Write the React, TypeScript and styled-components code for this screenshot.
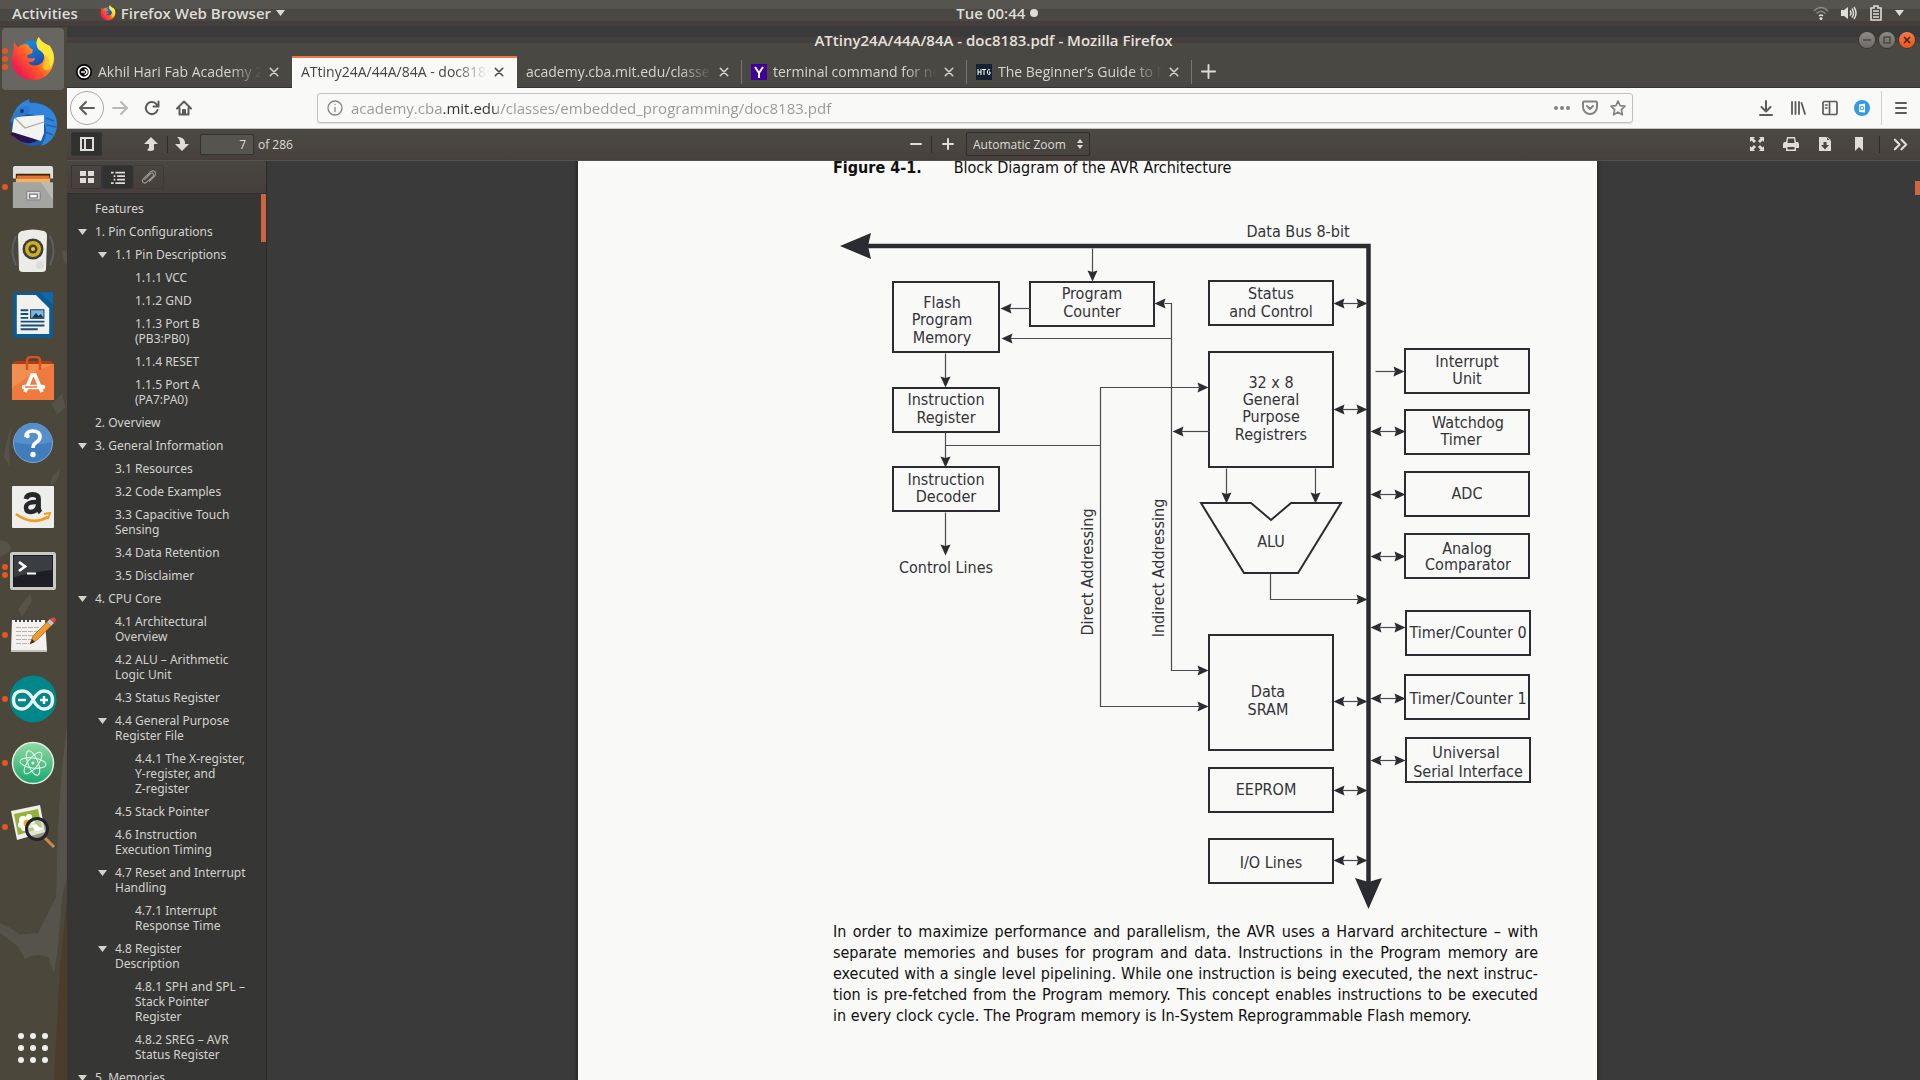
import React from "react";
import styled, { createGlobalStyle } from "styled-components";

const ui = `"Open Sans", "Noto Sans", sans-serif`;
const uiWide = `"Noto Sans", "Open Sans", sans-serif`;
const pdfFont = `"DejaVu Sans Condensed", "DejaVu Sans", sans-serif`;
const paper = "#f9f9f7";
const chrome = "#494843";
const ink = "#2b2c31";

const Global = createGlobalStyle`
  *, *::before, *::after { box-sizing: border-box; }
  body { margin: 0; background: #3a3a3a; }
  button, input, select { font: inherit; color: inherit; }
  button { background: none; border: 0; padding: 0; margin: 0; }
  svg { display: block; flex: none; }
  ul { list-style: none; margin: 0; padding: 0; }
`;

const Desktop = styled.div`
  height: 100vh;
  display: grid;
  grid-template: 27px minmax(0, 1fr) / 67px minmax(0, 1fr);
  font-family: ${ui};
  font-size: 14px;
  color: #dedcd6;
  overflow: hidden;
`;

/* ---------- top panel ---------- */
const Panel = styled.header`
  grid-column: 1 / -1;
  display: grid;
  grid-template-columns: 12fr auto 11fr;
  align-items: center;
  padding: 0 16px 2px 12px;
  font-size: 15px;
  font-weight: 600;
  line-height: 20px;
  background: linear-gradient(#55544e 9px, ${chrome} 9px, ${chrome} 21px, #463d3d 21px, #463d3d 26px, #3a3a3a 26px);
`;
const PanelGroup = styled.div<{ $end?: boolean }>`
  display: flex;
  align-items: center;
  justify-content: ${(p) => (p.$end ? "flex-end" : "flex-start")};
  gap: ${(p) => (p.$end ? "12px" : "22px")};
`;
const PanelButton = styled.button`
  display: flex;
  align-items: center;
  gap: 5px;
  font-weight: 600;
`;

/* ---------- dock ---------- */
const Dock = styled.nav`
  position: relative;
  display: flex;
  flex-direction: column;
  padding-top: 1px;
  background: #4b473a;
  overflow: hidden;
`;
const Wallpaper = styled.svg`
  position: absolute;
  left: 0;
  top: 0;
`;
const DockItem = styled.button<{ $active?: boolean }>`
  position: relative;
  width: 62px;
  height: 62px;
  flex: none;
  margin: 0 2px 2px;
  border-radius: 4px;
  display: grid;
  place-items: center;
  background: ${(p) => (p.$active ? "#676660" : "transparent")};
`;
const Dots = styled.span`
  position: absolute;
  left: 0;
  top: 0;
  bottom: 0;
  display: flex;
  flex-direction: column;
  justify-content: center;
  gap: 2px;
`;
const Dot = styled.i`
  width: 6px;
  height: 6px;
  border-radius: 3px;
  background: #e9541f;
`;
const AppsButton = styled.button`
  position: relative;
  margin: auto auto 16px 17px;
`;

/* ---------- browser window ---------- */
const Window = styled.main`
  display: grid;
  grid-template-rows: 29px 32px 41px 32px minmax(0, 1fr);
  min-width: 0;
  background: ${chrome};
`;
const TitleBar = styled.div`
  display: grid;
  grid-template-columns: 1fr auto 1fr;
  align-items: center;
  padding: 0 5px 3px;
  font-size: 15px;
  line-height: 20px;
  font-weight: 600;
  color: #e4e2dc;
  background: linear-gradient(#3a3a3a 10px, #463d3d 10px, #463d3d 16px, ${chrome} 16px);
`;
const WindowButtons = styled.div`
  display: flex;
  justify-content: flex-end;
  gap: 4px;
`;
const WindowButton = styled.button<{ $close?: boolean }>`
  width: 16px;
  height: 16px;
  border-radius: 8px;
  display: grid;
  place-items: center;
  background: ${(p) => (p.$close ? "linear-gradient(#f57a4b,#ea541f)" : "linear-gradient(#8d8b84,#6c6a64)")};
  box-shadow: 0 0 0 1px #3a3934;
`;
const TabStrip = styled.div`
  display: flex;
  border-bottom: 1px solid #33332f;
`;
const Tab = styled.div<{ $active?: boolean; $line?: boolean }>`
  flex: 0 1 225px;
  min-width: 0;
  display: flex;
  align-items: center;
  gap: 6px;
  height: 32px;
  padding: 0 12px 2px 9px;
  position: relative;
  color: ${(p) => (p.$active ? "#44433f" : "#d6d4ce")};
  background: ${(p) => (p.$active ? paper : "transparent")};
  border-top: 2px solid ${(p) => (p.$active ? "#f07746" : "transparent")};
  &::after {
    content: "";
    position: absolute;
    right: 0;
    top: 2px;
    height: 24px;
    width: ${(p) => (p.$line ? "1px" : "0")};
    background: #777670;
  }
`;
const TabTitle = styled.button`
  flex: 1;
  min-width: 0;
  overflow: hidden;
  white-space: nowrap;
  text-align: left;
  line-height: 20px;
  mask-image: linear-gradient(90deg, #000 calc(100% - 32px), transparent);
`;
const IconButton = styled.button<{ $w?: number }>`
  width: ${(p) => p.$w ?? 32}px;
  height: 30px;
  flex: none;
  display: grid;
  place-items: center;
`;
const CloseButton = styled(IconButton)`
  width: 12px;
  height: 20px;
`;

const NavBar = styled.div`
  display: flex;
  align-items: center;
  background: ${paper};
  border-bottom: 1px solid #c4c3bf;
  padding: 0 3px;
  color: #5c5b57;
`;
const BackButton = styled.button`
  width: 34px;
  height: 34px;
  border-radius: 17px;
  border: 1px solid #a9a8a4;
  display: grid;
  place-items: center;
`;
const UrlBox = styled.label`
  flex: 1;
  max-width: 1316px;
  height: 30px;
  margin-left: 117px;
  margin-right: 117px;
  display: flex;
  align-items: center;
  gap: 8px;
  padding: 0 6px 0 9px;
  border: 1px solid #c2c1bd;
  border-radius: 3px;
  box-shadow: 0 1px 1px #e0dfdb;
  color: #85847f;
`;
const UrlInput = styled.input`
  flex: 1;
  min-width: 0;
  border: 0;
  outline: 0;
  padding: 0;
  font-size: 15px;
  line-height: 22px;
  color: #8f8e8a;
  background: linear-gradient(90deg, #989793 92px, #33322f 92px, #33322f 146px, #989793 146px);
  -webkit-background-clip: text;
  -webkit-text-fill-color: transparent;
`;
const UrlActions = styled.div`
  display: flex;
  gap: 12px;
`;
const NavDivider = styled.i`
  width: 1px;
  height: 34px;
  margin: 0 3px;
  background: #d0cfcb;
`;

/* ---------- pdf toolbar ---------- */
const PdfBar = styled.div`
  display: grid;
  grid-template-columns: 1fr auto 1fr;
  align-items: center;
  padding: 0 0 1px 4px;
  font-size: 12px;
  background: linear-gradient(#4a4843, #494641 60%, #473e3c);
  border-bottom: 1px solid #54524d;
`;
const BarGroup = styled.div<{ $end?: boolean }>`
  display: flex;
  align-items: center;
  justify-content: ${(p) => (p.$end ? "flex-end" : "flex-start")};
`;
const ToggleButton = styled.button<{ $on?: boolean; $dim?: boolean }>`
  width: 31px;
  height: 24px;
  display: grid;
  place-items: center;
  border: 1px solid #35343a;
  border-radius: 2px;
  background: ${(p) => (p.$on ? "#31312f" : "transparent")};
  opacity: ${(p) => (p.$dim ? 0.55 : 1)};
`;
const Splitter = styled.i<{ $gap?: boolean }>`
  width: 1px;
  height: 17px;
  margin-left: ${(p) => (p.$gap ? 3 : 0)}px;
  background: #2b2b29;
`;
const PagingGroup = styled(BarGroup)`
  margin-left: 33px;
`;
const PageInput = styled.input`
  width: 54px;
  height: 21px;
  margin: 0 4px;
  padding: 0 7px;
  text-align: right;
  border: 1px solid #33322f;
  border-radius: 2px;
  background: #55544e;
`;
const ZoomBox = styled.span`
  display: flex;
  align-items: center;
  height: 24px;
  width: 124px;
  margin-left: 2px;
  padding: 0 6px;
  border: 1px solid #2f2e2c;
  border-radius: 2px;
`;
const ZoomSelect = styled.select`
  appearance: none;
  flex: 1;
  min-width: 0;
  padding: 0;
  border: 0;
  background: transparent;
`;

/* ---------- pdf body ---------- */
const Body = styled.div`
  display: grid;
  grid-template-columns: 200px minmax(0, 1fr);
  min-height: 0;
`;
const Sidebar = styled.aside`
  display: flex;
  flex-direction: column;
  min-height: 0;
  border-right: 1px solid #2a2a2a;
  background: #363734;
`;
const SidebarBar = styled.div`
  display: flex;
  flex: none;
  height: 33px;
  padding: 4px;
  background: linear-gradient(#494641, #473e3c);
  border-bottom: 1px solid #2f2e2c;
`;
const Outline = styled.div`
  flex: 1;
  min-height: 0;
  overflow: hidden;
  position: relative;
  padding-top: 3px;
  font-family: ${uiWide};
  font-size: 12px;
  line-height: 15px;
  color: #d3d2ce;
`;
const OutlineRow = styled.li<{ $level: number }>`
  display: flex;
  padding: 4px 10px 4px ${(p) => 11 + p.$level * 20}px;
`;
const Twisty = styled.button`
  width: 17px;
  height: 15px;
  flex: none;
  display: flex;
  align-items: center;
`;
const Leaf = styled.span`
  width: 17px;
  flex: none;
`;
const OutlineLink = styled.a`
  color: inherit;
  text-decoration: none;
  white-space: pre;
`;
const Thumb = styled.i<{ $w: number; $top: number; $h: number }>`
  position: absolute;
  right: 0;
  top: ${(p) => p.$top}px;
  width: ${(p) => p.$w}px;
  height: ${(p) => p.$h}px;
  background: #cb6640;
`;
const Viewer = styled.div`
  position: relative;
  overflow: hidden;
  padding-right: 12px;
  display: flex;
  justify-content: center;
  background: #3a3a3a;
`;
const Page = styled.article`
  flex: 0 1 1019px;
  padding: 0 59px 0 255px;
  background: ${paper};
  box-shadow: 0 0 3px 2px #2a2a2c;
  font-family: ${pdfFont};
  font-size: 16px;
  color: #101010;
`;
const Caption = styled.h1`
  margin: 0;
  display: flex;
  gap: 32px;
  font-size: 16px;
  line-height: 14px;
  font-weight: 400;
  white-space: nowrap;
`;
const Paragraph = styled.p`
  margin: 0;
  padding-top: 2px;
  line-height: 21px;
`;
const Line = styled.span`
  display: block;
  white-space: nowrap;
  text-align-last: justify;
  &:last-child { text-align-last: left; }
`;
const DiagramText = styled.text`
  font-family: ${pdfFont};
  font-size: 16px;
  fill: #333338;
`;

/* ---------- diagram ---------- */
type BoxSpec = [number, number, number, number];
const boxes: BoxSpec[] = [
  [893, 282, 106, 70], [1030, 282, 124, 44], [893, 388, 106, 44], [893, 467, 106, 44],
  [1209, 281, 124, 44], [1209, 352, 124, 115], [1405, 349, 124, 44], [1405, 410, 124, 44],
  [1405, 472, 124, 44], [1405, 534, 124, 44], [1406, 611, 124, 44], [1405, 675, 124, 44],
  [1406, 738, 124, 44], [1209, 635, 124, 115], [1209, 768, 124, 44], [1209, 839, 124, 44],
];
type Label = [number, number, string];
const labels: Label[] = [
  [942, 308, "Flash"], [942, 325, "Program"], [942, 343, "Memory"],
  [1092, 299, "Program"], [1092, 317, "Counter"],
  [946, 405, "Instruction"], [946, 423, "Register"],
  [946, 485, "Instruction"], [946, 502, "Decoder"], [946, 573, "Control Lines"],
  [1298, 237, "Data Bus 8-bit"], [1271, 299, "Status"], [1271, 317, "and Control"],
  [1271, 388, "32 x 8"], [1271, 405, "General"], [1271, 422, "Purpose"], [1271, 440, "Registrers"],
  [1467, 367, "Interrupt"], [1467, 384, "Unit"], [1468, 428, "Watchdog"], [1461, 445, "Timer"],
  [1467, 499, "ADC"], [1467, 554, "Analog"], [1468, 570, "Comparator"],
  [1271, 547, "ALU"], [1468, 638, "Timer/Counter 0"], [1468, 704, "Timer/Counter 1"],
  [1466, 758, "Universal"], [1468, 777, "Serial Interface"],
  [1268, 697, "Data"], [1268, 715, "SRAM"], [1266, 795, "EEPROM"], [1271, 868, "I/O Lines"],
];
const wires = [
  "M1092 248V272", "M1030 308H1009", "M1171 338H1010", "M945 353V378", "M945 432V458",
  "M945 445H1100", "M945 512V546", "M1200 387H1100V706H1200", "M1209 431H1181",
  "M1164 303H1171V670H1200", "M1226 468V494", "M1315 468V494", "M1270 573V599H1359", "M1375 371H1396",
  ...[303, 409, 701, 790, 860].map((y) => `M1342 ${y}H1359`),
  ...[431, 494, 556, 627, 698, 760].map((y) => `M1378 ${y}H1396`),
];
type Tip = [number, number, number];
const tips: Tip[] = [
  [1092, 281, 90], [1000, 308, 180], [1001, 338, 180], [1154, 303, 180], [945, 387, 90], [945, 467, 90],
  [945, 555, 90], [1208, 387, 0], [1172, 431, 180], [1208, 670, 0], [1208, 706, 0], [1226, 503, 90],
  [1315, 503, 90], [1367, 599, 0], [1404, 371, 0],
  ...[303, 409, 701, 790, 860].flatMap((y): Tip[] => [[1333, y, 180], [1367, y, 0]]),
  ...[431, 494, 556, 627, 698, 760].flatMap((y): Tip[] => [[1370, y, 180], [1405, y, 0]]),
];

function Diagram() {
  return (
    <svg width="705" height="744" viewBox="833 175 705 744" role="img" aria-label="Block diagram">
      <g fill="none" stroke={ink} strokeWidth="2">
        {boxes.map(([x, y, w, h], i) => <rect key={i} x={x} y={y} width={w} height={h} />)}
        <path d="M1201 503H1251L1271 520 1291 503H1341L1298 573H1244Z" />
      </g>
      <path d="M868 246H1368.5V882" fill="none" stroke={ink} strokeWidth="4.5" />
      <g fill={ink}>
        <path d="M840 246L871 233 868 246 871 259Z" />
        <path d="M1368.5 909L1355 878 1368.5 882 1382 878Z" />
        {tips.map(([x, y, r], i) => (
          <path key={i} d="M0 0L-11 -5 -9.5 0 -11 5Z" transform={`translate(${x + 0.5} ${y + 0.5}) rotate(${r})`} />
        ))}
      </g>
      <g fill="none" stroke="#4a4b50" strokeWidth="1.2" transform="translate(0.5 0.5)">
        {wires.map((d) => <path key={d} d={d} />)}
      </g>
      {labels.map(([x, y, t], i) => <DiagramText key={i} x={x} y={y} textAnchor="middle">{t}</DiagramText>)}
      <DiagramText transform="translate(1093 572) rotate(-90)" textAnchor="middle">Direct Addressing</DiagramText>
      <DiagramText transform="translate(1164 568) rotate(-90)" textAnchor="middle">Indirect Addressing</DiagramText>
    </svg>
  );
}

/* ---------- icons ---------- */
const FirefoxIcon = ({ size }: { size: number }) => (
  <svg width={size} height={size} viewBox="0 0 48 48">
    <defs>
      <linearGradient id="fxa" x1="0.9" y1="0.1" x2="0.15" y2="0.75">
        <stop offset="0" stopColor="#fff14a" /><stop offset=".35" stopColor="#ffa41f" />
        <stop offset=".65" stopColor="#ff5a26" /><stop offset="1" stopColor="#f0204f" />
      </linearGradient>
      <linearGradient id="fxb" x1="0" y1="0" x2=".5" y2="1">
        <stop offset="0" stopColor="#0a9df5" /><stop offset="1" stopColor="#243a9e" />
      </linearGradient>
    </defs>
    <circle cx="24" cy="23" r="18" fill="url(#fxb)" />
    <path d="M5 6C5 9 7 11 8 12 11 9 15 8 19 9 20 11 21 13 24 14L23 18 18 20 18 23C21 23 23 24 26 23 26 26 23 28 19 27 21 32 30 32 34 27 37 22 36 17 30 14 27 10 27 5 30 1 32 6 38 9 41 10 46 16 48 24 44 33 40 42 32 46 24 46 13 46 5 40 2 30 1 24 2 18 4 14 3 11 4 8 5 6Z" fill="url(#fxa)" />
    <path d="M30 1C32 6 38 9 41 10 46 17 47 26 42 34 36 34 38 26 36 20 34 16 31 15 30 14 27 10 27 5 30 1Z" fill="#ffe838" />
    <path d="M42 34C38 37 34 36 34 30 38 25 37 22 36 19 40 22 42 28 42 34Z" fill="#ffc22b" />
  </svg>
);
const Thunderbird = () => (
  <svg width="50" height="50" viewBox="0 0 50 50">
    <circle cx="25" cy="26" r="22" fill="#1c5bb0" />
    <path d="M3 24C5 13 11 4 22 1 20 4 22 5 24 5 39 5 49 14 49 26 49 38 41 46 33 48 38 40 39 34 37 27 33 18 24 15 14 16 8 18 5 21 3 24Z" fill="#3184d8" />
    <path d="M38 20L46 23M38 27L48 29M37 34L45 37" stroke="#1f62b5" strokeWidth="1.500" />
    <path d="M2 36L8 33 30 42C24 46 18 46 12 43Z" fill="#2a1450" />
    <path d="M6 19L36 17 36 35 33 43 4 34Z" fill="#f3f3f1" />
    <path d="M6 19L17 30 36 24" stroke="#a9a9a9" strokeWidth="1.300" fill="none" />
    <path d="M2 25C5 14 12 7 19 8 23 9 22 15 17 17L7 20Z" fill="#2e78cf" /><circle cx="14" cy="13" r="2" fill="#153b70" />
  </svg>
);
const Files = () => (
  <svg width="42" height="44" viewBox="0 0 44 46">
    <path d="M3 1H41Q43 1 43 4V14H1V4Q1 1 3 1Z" fill="#e0e0dd" /><path d="M4 9H40V22H4Z" fill="#3d2417" />
    <rect x="5" y="11" width="34" height="3" fill="#e9732e" /><rect x="4" y="14" width="36" height="6" fill="#f5b25f" />
    <path d="M1 18H43V45H1Z" fill="#b9b9b6" /><path d="M1 18L30 18 43 36V45H1Z" fill="#a4a4a1" />
    <rect x="15.500" y="27.500" width="14" height="9" rx="1" fill="#ddd" stroke="#777" /><rect x="18.500" y="30.500" width="8" height="4" fill="#fff" stroke="#555" />
  </svg>
);
const Speaker = () => (
  <svg width="46" height="46" viewBox="0 0 46 46">
    <path d="M6 8Q-1 23 6 37M40 8Q47 23 40 37" stroke="#5f6a78" strokeWidth="2" strokeOpacity=".7" fill="none" />
    <path d="M12 3Q23 0 34 3 37 4 37 8L36 41Q36 44 32 44H13Q9 44 9 41L8 8Q8 4 12 3Z" fill="#ebebe8" />
    <circle cx="23" cy="21" r="10.500" fill="#3c3c3c" /><circle cx="23" cy="21" r="8" fill="#cfaf22" />
    <circle cx="23" cy="21" r="4.500" fill="#4a3f1c" /><circle cx="23" cy="21" r="2" fill="#e3cc55" /><circle cx="30" cy="37" r="4" fill="#dcdcd9" />
  </svg>
);
const Writer = () => (
  <svg width="40" height="48" viewBox="0 0 42 48">
    <path d="M3 0H28L42 13V45Q42 48 39 48H3Q0 48 0 45V3Q0 0 3 0Z" fill="#0a5c99" /><path d="M28 0H42V13Z" fill="#0c68b0" />
    <path d="M4 3H24L38 17V44H4Z" fill="#f3f1ec" />
    <g stroke="#14507f" strokeWidth="2"><path d="M8 19H16M8 23H16M8 27H16M8 31H33M8 35H33M8 39H26" /></g>
    <rect x="18.500" y="18.500" width="14" height="9" fill="#7ab8e0" stroke="#0f3d5f" /><path d="M20 27L24 22 27 25 29 23 32 27Z" fill="#16334a" />
  </svg>
);
const Software = () => (
  <svg width="42" height="46" viewBox="0 0 42 46">
    <path d="M1 7L3 5H39L42 9H0Z" fill="#b23c14" />
    <path d="M15 12V5Q15 1 19 1H24Q28 1 28 5V12" fill="none" stroke="#d9531f" strokeWidth="2.500" />
    <path d="M0 8H42V44H0Z" fill="#ef7a3e" /><path d="M0 8H42L24 15 0 32Z" fill="#f08f4f" />
    <path d="M15 8V14M28 8V14" stroke="#d9531f" strokeWidth="2.500" />
    <path d="M13 36L20 19H23L30 36" fill="none" stroke="#fff" strokeWidth="3.600" /><path d="M12 31H31" stroke="#fff" strokeWidth="4.500" strokeLinecap="round" /><path d="M13 31H25" stroke="#ef7a3e" strokeWidth="1.500" />
  </svg>
);
const Help = () => (
  <svg width="42" height="42" viewBox="0 0 42 42">
    <circle cx="21" cy="21" r="19.500" fill="#3f7dbd" stroke="#7fa9d4" /><path d="M2 20A19 19 0 0 1 40 20Q21 25 2 20Z" fill="#5590cb" />
    <path d="M14 15Q14 9 20.500 9 28 9 28 15 28 18 24 20.500 21 22.500 21 26" fill="none" stroke="#fff" strokeWidth="3.600" /><circle cx="15.500" cy="14" r="2.200" fill="#fff" /><circle cx="21" cy="32.500" r="2.700" fill="#fff" />
  </svg>
);
const Amazon = () => (
  <svg width="42" height="42" viewBox="0 0 42 42">
    <rect width="42" height="42" rx="1" fill="#eeeeec" />
    <path d="M14 13Q15 8.500 20.500 8.500 26.500 8.500 26.500 13V22Q26.500 24.500 28.500 26.500" fill="none" stroke="#26272b" strokeWidth="4.800" />
    <path d="M26 16Q14 15.500 14 21.500 14 26 18.500 26 25 26 26 19" fill="none" stroke="#26272b" strokeWidth="4.400" />
    <path d="M4 28Q20 40 36 31" fill="none" stroke="#f49a1c" strokeWidth="2.600" /><path d="M32 28L38 27 36 33" fill="none" stroke="#f49a1c" strokeWidth="1.800" />
  </svg>
);
const Terminal = () => (
  <svg width="46" height="38" viewBox="0 0 46 38">
    <rect x="1.500" y="1.500" width="43" height="35" rx="1" fill="#1c1f26" stroke="#c9c9c6" strokeWidth="3" />
    <path d="M4 4H42V18Q22 20 4 25Z" fill="#3a3d42" />
    <path d="M9 10L15 14.500 9 19" fill="none" stroke="#fff" strokeWidth="2.800" /><path d="M17 21.500H26" stroke="#fff" strokeWidth="2" />
  </svg>
);
const Notes = () => (
  <svg width="48" height="40" viewBox="0 0 48 40">
    <path d="M3 5H36L38 36H2Z" fill="#f3f2ee" /><path d="M2 35H38V37H2Z" fill="#c4bfb8" />
    <g stroke="#b7b5ae"><path d="M7 12.500H31M7 16.500H30M7 20.500H28M7 24.500H24M7 28.500H20" strokeDasharray="5 1" /></g>
    <path d="M7 2V7M11 2V7M15 2V7M19 2V7M23 2V7M27 2V7M31 2V7" stroke="#454441" strokeWidth="2" />
    <path d="M21 29L24 21 38 7 42 11 28 25Z" fill="#f19a32" stroke="#a85b15" strokeWidth=".7" /><path d="M38 7L41 4 45 8 42 11Z" fill="#bdc5cd" /><path d="M41 4Q44 1 46 3 48 6 45 8Z" fill="#e5453b" />
    <path d="M21 29L23 24 26 27Z" fill="#333" />
  </svg>
);
const Arduino = () => (
  <svg width="48" height="48" viewBox="0 0 48 48">
    <circle cx="24" cy="24" r="23.500" fill="#00878a" />
    <path d="M24 24C20 17 17 16 13 16 8 16 4.500 19 4.500 25S8 34 13 34C17 34 20 32 24 25 28 18 31 16 35 16 40 16 43.500 19 43.500 25S40 34 35 34C31 34 28 32 24 25Z" fill="none" stroke="#e8f3f1" strokeWidth="3.400" />
    <path d="M9 25H17M31 25H39M35 21V29" stroke="#fff" strokeWidth="2.400" />
  </svg>
);
const Atom = () => (
  <svg width="44" height="44" viewBox="0 0 44 44">
    <defs><linearGradient id="at" x1="0" y1="0" x2="0" y2="1"><stop offset="0" stopColor="#93d9a4" /><stop offset=".5" stopColor="#56c287" /><stop offset="1" stopColor="#17a872" /></linearGradient></defs>
    <circle cx="22" cy="22" r="20.500" fill="url(#at)" stroke="#e3ece5" strokeWidth="1.500" />
    <g fill="none" stroke="#e9faf0" strokeWidth="1">
      <ellipse cx="22" cy="22" rx="13" ry="5" transform="rotate(8 22 22)" /><ellipse cx="22" cy="22" rx="13" ry="5" transform="rotate(68 22 22)" /><ellipse cx="22" cy="22" rx="13" ry="5" transform="rotate(128 22 22)" />
    </g>
    <circle cx="22" cy="22" r="1.500" fill="#fff" />
  </svg>
);
const Photo = () => (
  <svg width="46" height="46" viewBox="0 0 46 46">
    <path d="M1 7L30 1 35 28 7 36Z" fill="#efefec" /><path d="M4 10L28 5 32 24 8 31Z" fill="#93b23a" />
    <g fill="#fff"><circle cx="13" cy="16" r="4" /><circle cx="19" cy="13" r="3" /><circle cx="11" cy="21" r="3" /><circle cx="20" cy="19" r="5" /><circle cx="14" cy="24" r="3" /></g><circle cx="17" cy="19" r="3.500" fill="#f4a81d" />
    <path d="M35 34L44 43" stroke="#c78a4e" strokeWidth="3" /><circle cx="27" cy="25" r="10.500" fill="#d5dbc5" fillOpacity=".55" stroke="#23242a" strokeWidth="3" />
    <path d="M22 22L26 20 29 23 33 24 29 27 25 27Z" fill="#fff" />
  </svg>
);

const stroke = (d: string, size = 16, w = 2) => (
  <svg width={size} height={size} viewBox="0 0 16 16" fill="none" stroke="currentColor" strokeWidth={w} strokeLinecap="round" strokeLinejoin="round"><path d={d} /></svg>
);
const solid = (d: string, size = 16) => (
  <svg width={size} height={size} viewBox="0 0 16 16" fill="#deddd9" fillRule="evenodd"><path d={d} /></svg>
);

const dock: { name: string; icon: React.ReactNode; dots: number }[] = [
  { name: "Firefox", icon: <FirefoxIcon size={46} />, dots: 3 },
  { name: "Thunderbird", icon: <Thunderbird />, dots: 0 },
  { name: "Files", icon: <Files />, dots: 1 },
  { name: "Rhythmbox", icon: <Speaker />, dots: 0 },
  { name: "Writer", icon: <Writer />, dots: 0 },
  { name: "Software", icon: <Software />, dots: 0 },
  { name: "Help", icon: <Help />, dots: 0 },
  { name: "Amazon", icon: <Amazon />, dots: 0 },
  { name: "Terminal", icon: <Terminal />, dots: 2 },
  { name: "Text Editor", icon: <Notes />, dots: 1 },
  { name: "Arduino", icon: <Arduino />, dots: 1 },
  { name: "Atom", icon: <Atom />, dots: 1 },
  { name: "Image Viewer", icon: <Photo />, dots: 1 },
];

const tabs: { title: string; icon?: React.ReactNode; active?: boolean; line?: boolean }[] = [
  {
    title: "Akhil Hari Fab Academy 2",
    icon: <svg width="16" height="16" viewBox="0 0 16 16"><circle cx="8" cy="8" r="8" fill="#000" /><circle cx="8" cy="8" r="5.500" fill="none" stroke="#fff" strokeWidth="1.700" /><path d="M5 8H9M8.500 5.500Q11 6 11 8T8.500 10.500" stroke="#fff" strokeWidth="1.500" fill="none" /></svg>,
  },
  { title: "ATtiny24A/44A/84A - doc818", active: true },
  { title: "academy.cba.mit.edu/classe", line: true },
  {
    title: "terminal command for ne",
    line: true,
    icon: <svg width="16" height="16" viewBox="0 0 16 16"><rect width="16" height="16" fill="#410093" /><path d="M4 3L8 9 12 3M8 9V14" stroke="#fff" strokeWidth="2" fill="none" /></svg>,
  },
  {
    title: "The Beginner’s Guide to N",
    line: true,
    icon: <svg width="16" height="16" viewBox="0 0 16 16"><rect width="16" height="16" fill="#152232" /><path d="M2 5V11M5 5V11M2 8H5M6 5.500H10M8 5.500V11M14 6Q11.500 4.500 11.500 8T14 10V8H13" stroke="#fff" fill="none" /></svg>,
  },
];

type Entry = [number, string, boolean?];
const outline: Entry[] = [
  [0, "Features"], [0, "1. Pin Configurations", true], [1, "1.1 Pin Descriptions", true],
  [2, "1.1.1 VCC"], [2, "1.1.2 GND"], [2, "1.1.3 Port B\n(PB3:PB0)"], [2, "1.1.4 RESET"],
  [2, "1.1.5 Port A\n(PA7:PA0)"], [0, "2. Overview"], [0, "3. General Information", true],
  [1, "3.1 Resources"], [1, "3.2 Code Examples"], [1, "3.3 Capacitive Touch\nSensing"],
  [1, "3.4 Data Retention"], [1, "3.5 Disclaimer"], [0, "4. CPU Core", true],
  [1, "4.1 Architectural\nOverview"], [1, "4.2 ALU – Arithmetic\nLogic Unit"], [1, "4.3 Status Register"],
  [1, "4.4 General Purpose\nRegister File", true], [2, "4.4.1 The X-register,\nY-register, and\nZ-register"],
  [1, "4.5 Stack Pointer"], [1, "4.6 Instruction\nExecution Timing"],
  [1, "4.7 Reset and Interrupt\nHandling", true], [2, "4.7.1 Interrupt\nResponse Time"],
  [1, "4.8 Register\nDescription", true], [2, "4.8.1 SPH and SPL –\nStack Pointer\nRegister"],
  [2, "4.8.2 SREG – AVR\nStatus Register"], [0, "5. Memories", true],
];

const paragraph = [
  "In order to maximize performance and parallelism, the AVR uses a Harvard architecture – with",
  "separate memories and buses for program and data. Instructions in the Program memory are",
  "executed with a single level pipelining. While one instruction is being executed, the next instruc-",
  "tion is pre-fetched from the Program memory. This concept enables instructions to be executed",
  "in every clock cycle. The Program memory is In-System Reprogrammable Flash memory.",
];

const Caret = () => <svg width="9" height="6" viewBox="0 0 9 6"><path d="M0 0H9L4.500 6Z" fill="currentColor" /></svg>;

export default function App() {
  return (
    <Desktop>
      <Global />
      <Panel>
        <PanelGroup>
          <PanelButton>Activities</PanelButton>
          <PanelButton><FirefoxIcon size={16} />Firefox Web Browser<Caret /></PanelButton>
        </PanelGroup>
        <PanelButton>Tue 00:44<svg width="8" height="8"><circle cx="4" cy="4" r="4" fill="currentColor" /></svg></PanelButton>
        <PanelGroup $end>
          <svg width="16" height="16" viewBox="0 0 16 16" fill="none" stroke="#8b8a85" strokeWidth="1.600"><path d="M1 6Q8 -1 15 6M3.500 8.500Q8 4 12.500 8.500" /><path d="M6 11Q8 9 10 11" stroke="#deddd9" /><circle cx="8" cy="13.500" r="1.500" fill="#deddd9" stroke="none" /></svg>
          <svg width="16" height="16" viewBox="0 0 16 16" fill="none" stroke="#deddd9" strokeWidth="1.500"><path d="M0 5H3L7 2V14L3 11H0Z" fill="#deddd9" stroke="none" /><path d="M9 5.500Q11 8 9 10.500M11 3.500Q14 8 11 12.500M13 2Q17 8 13 14" /></svg>
          <svg width="14" height="16" viewBox="0 0 14 16" fill="none" stroke="#deddd9" strokeWidth="1.600"><path d="M2 3H5V1H9V3H12V15H2Z" /><path d="M4 6H10M4 9H10M4 12H10" /></svg>
          <Caret />
        </PanelGroup>
      </Panel>

      <Dock aria-label="Dock">
        <Wallpaper width="67" height="1053" viewBox="0 0 67 1053" aria-hidden="true">
          <path d="M62 225Q66 221 67 228V236Q62 234 62 225ZM52 377L62 366 65 380 57 388ZM4 430Q6 412 12 400L9 420 10 440ZM52 450L60 442 58 452 50 460Z" fill="#555349" />
          <path d="M0 513Q14 516 10 524L0 530ZM18 582L30 567 32 574 22 590ZM67 700V850L62 870 58 920 54 946 48 930Q35 925 25 932L12 908 38 906 56 870 58 800 62 740Z" fill="#56544a" />
          <path d="M0 896Q16 902 30 918L24 924 0 906Z" fill="#56544a" />
          <path d="M67 870V1053H54L60 940Z" fill="#4b3c2c" />
        </Wallpaper>
        {dock.map((d, i) => (
          <DockItem key={d.name} $active={i === 0} aria-label={d.name}>
            {d.icon}
            <Dots>{Array.from({ length: d.dots }, (_, n) => <Dot key={n} />)}</Dots>
          </DockItem>
        ))}
        <AppsButton aria-label="Show applications">
          <svg width="32" height="32" viewBox="0 0 32 32" fill="#f0efec">
            {[4, 16, 28].flatMap((y) => [4, 16, 28].map((x) => <circle key={`${x}-${y}`} cx={x} cy={y} r="3" />))}
          </svg>
        </AppsButton>
      </Dock>

      <Window>
        <TitleBar>
          <span />
          <span>ATtiny24A/44A/84A - doc8183.pdf - Mozilla Firefox</span>
          <WindowButtons>
            <WindowButton aria-label="Minimize"><svg width="8" height="8"><path d="M0 4H8" stroke="#3c3b36" strokeWidth="1.200" /></svg></WindowButton>
            <WindowButton aria-label="Maximize"><svg width="8" height="8"><rect x="1" y="1" width="6" height="6" fill="none" stroke="#3c3b36" strokeWidth="1.200" /></svg></WindowButton>
            <WindowButton $close aria-label="Close"><svg width="8" height="8"><path d="M1 1L7 7M7 1L1 7" stroke="#4a2010" strokeWidth="1.500" /></svg></WindowButton>
          </WindowButtons>
        </TitleBar>

        <TabStrip>
          {tabs.map((t) => (
            <Tab key={t.title} $active={t.active} $line={t.line}>
              {t.icon}
              <TabTitle>{t.title}</TabTitle>
              <CloseButton aria-label="Close tab">{stroke("M3 3L13 13M13 3L3 13", 12)}</CloseButton>
            </Tab>
          ))}
          <IconButton aria-label="New tab">{stroke("M8 1V15M1 8H15", 15)}</IconButton>
        </TabStrip>

        <NavBar>
          <BackButton aria-label="Back">{stroke("M15 8H1.500M7 2L1 8L7 14")}</BackButton>
          <IconButton aria-label="Forward" disabled><svg width="16" height="16" viewBox="0 0 16 16" fill="none" stroke="#b9b8b4" strokeWidth="2" strokeLinecap="round"><path d="M1 8H14.500M9 2L15 8L9 14" /></svg></IconButton>
          <IconButton aria-label="Reload">{stroke("M13.500 10A6 6 0 1 1 12 3.800L14 6M14.500 1.500V6.500H9.500")}</IconButton>
          <IconButton aria-label="Home">{stroke("M1 8.500L8 1.500L15 8.500M3.500 8V14.500H12.500V8M7 14V10H9V14")}</IconButton>
          <UrlBox>
            {stroke("M8 1A7 7 0 1 1 8 15A7 7 0 1 1 8 1M8 7.500V11.500M8 4.500V4.600", 16, 1.3)}
            <UrlInput aria-label="Address" defaultValue="academy.cba.mit.edu/classes/embedded_programming/doc8183.pdf" />
            <UrlActions>
              <svg width="16" height="16" viewBox="0 0 16 16" fill="currentColor"><circle cx="2" cy="8" r="2" /><circle cx="8" cy="8" r="2" /><circle cx="14" cy="8" r="2" /></svg>
              {stroke("M2 1.500H14Q15 1.500 15 2.500V7A7 7 0 0 1 1 7V2.500Q1 1.500 2 1.500ZM5 6L8 9L11 6")}
              {stroke("M8 1L10.100 5.700L15 6.200L11.400 9.600L12.400 14.800L8 12.100L3.600 14.800L4.600 9.600L1 6.200L5.900 5.700Z", 16, 1.7)}
            </UrlActions>
          </UrlBox>
          <IconButton aria-label="Downloads">{stroke("M8 1V11M3.500 7L8 11.500L12.500 7M2 15H14")}</IconButton>
          <IconButton aria-label="Library">{stroke("M2 2V14M5.500 2V14M9 2V14M11.500 3L15 14", 16, 1.8)}</IconButton>
          <IconButton aria-label="Sidebars">{stroke("M2.500 1.500H13.500Q15 1.500 15 3V13Q15 14.500 13.500 14.500H2.500Q1 14.500 1 13V3Q1 1.500 2.500 1.500ZM7.500 2V14M3.500 5H5M3.500 8H5", 16, 1.7)}</IconButton>
          <IconButton aria-label="Extension"><svg width="16" height="16" viewBox="0 0 16 16"><circle cx="8" cy="8" r="8" fill="#3499e6" /><path d="M5 4.500L11 3.500V12.500L5 12Z" fill="#fff" /><circle cx="8" cy="8" r="1.800" fill="none" stroke="#3499e6" /></svg></IconButton>
          <NavDivider />
          <IconButton aria-label="Menu">{stroke("M3 3H13M3 8H13M3 13H13")}</IconButton>
        </NavBar>

        <PdfBar>
          <BarGroup>
            <ToggleButton $on aria-label="Toggle sidebar">{solid("M1 1H15V15H1ZM3 3V13H5V3ZM7 3V13H13V3Z")}</ToggleButton>
            <PagingGroup>
              <IconButton aria-label="Previous page">{solid("M8 1L15 8H11V14Q7 16 4 14Q6 13 6 11V8H1Z")}</IconButton>
              <Splitter />
              <IconButton $w={28} aria-label="Next page">{solid("M8 15L15 8H11V6Q10 1 3 1Q6 3 6 6V8H1Z")}</IconButton>
              <PageInput aria-label="Page" defaultValue="7" />
              <span>of 286</span>
            </PagingGroup>
          </BarGroup>
          <BarGroup>
            <IconButton $w={30} aria-label="Zoom out">{stroke("M3 8H13")}</IconButton>
            <Splitter />
            <IconButton aria-label="Zoom in">{stroke("M3 8H13M8 3V13")}</IconButton>
            <ZoomBox>
              <ZoomSelect aria-label="Zoom" defaultValue="auto"><option value="auto">Automatic Zoom</option></ZoomSelect>
              <svg width="6" height="10" viewBox="0 0 6 10" fill="currentColor"><path d="M0 4L3 0L6 4ZM0 6H6L3 10Z" /></svg>
            </ZoomBox>
          </BarGroup>
          <BarGroup $end>
            <IconButton $w={34} aria-label="Presentation mode">{solid("M1 1H6L4.500 2.500L7 5L5 7L2.500 4.500L1 6ZM15 1V6L13.500 4.500L11 7L9 5L11.500 2.500L10 1ZM1 15V10L2.500 11.500L5 9L7 11L4.500 13.500L6 15ZM15 15H10L11.500 13.500L9 11L11 9L13.500 11.500L15 10Z")}</IconButton>
            <IconButton $w={34} aria-label="Print">{solid("M4 1H12L13 6H15L16 8V12H13V15H3V12H0V8L1 6H3ZM5 2.500L4.500 7H11.500L11 2.500ZM4.500 11V13.500H11.500V11Z")}</IconButton>
            <IconButton $w={34} aria-label="Download">{solid("M2 1H9L14 5V15H2ZM10 1L14 4H10ZM6.500 6V9H4L8 13.500L12 9H9.500V6Z")}</IconButton>
            <IconButton $w={34} aria-label="Bookmark">{solid("M4 1H12V15L8 11L4 15Z")}</IconButton>
            <Splitter $gap />
            <IconButton $w={40} aria-label="Tools">{stroke("M2 3L7 8L2 13M9 3L14 8L9 13", 15, 2.4)}</IconButton>
          </BarGroup>
        </PdfBar>

        <Body>
          <Sidebar>
            <SidebarBar>
              <ToggleButton aria-label="Thumbnails">{solid("M1 2H7V7H1ZM9 2H15V7H9ZM1 9H7V14H1ZM9 9H15V14H9Z")}</ToggleButton>
              <ToggleButton $on aria-label="Outline">{solid("M0 2H3V4H0ZM5 2H16V4H5ZM3 6H5V8H3ZM7 6H16V8H7ZM3 10H5V12H3ZM7 10H16V12H7ZM0 14H3V16H0ZM5 14H16V16H5Z", 14)}</ToggleButton>
              <ToggleButton $dim aria-label="Attachments">{stroke("M4 10L10 4Q12 2.500 13 4T12.500 7L6 13Q3.500 15 2 13T3 9L10 2Q13 0 15 2T14 7L9 12", 15, 1.2)}</ToggleButton>
            </SidebarBar>
            <Outline>
              <ul>
                {outline.map(([level, text, open]) => (
                  <OutlineRow key={text} $level={level}>
                    {open ? <Twisty aria-label="Collapse"><Caret /></Twisty> : <Leaf />}
                    <OutlineLink href="#outline">{text}</OutlineLink>
                  </OutlineRow>
                ))}
              </ul>
              <Thumb $w={5} $top={0} $h={48} />
            </Outline>
          </Sidebar>
          <Viewer>
            <Page>
              <Caption><b>Figure 4-1.</b><span>Block Diagram of the AVR Architecture</span></Caption>
              <Diagram />
              <Paragraph>{paragraph.map((l) => <Line key={l}>{l}</Line>)}</Paragraph>
            </Page>
            <Thumb $w={5} $top={20} $h={14} />
          </Viewer>
        </Body>
      </Window>
    </Desktop>
  );
}
